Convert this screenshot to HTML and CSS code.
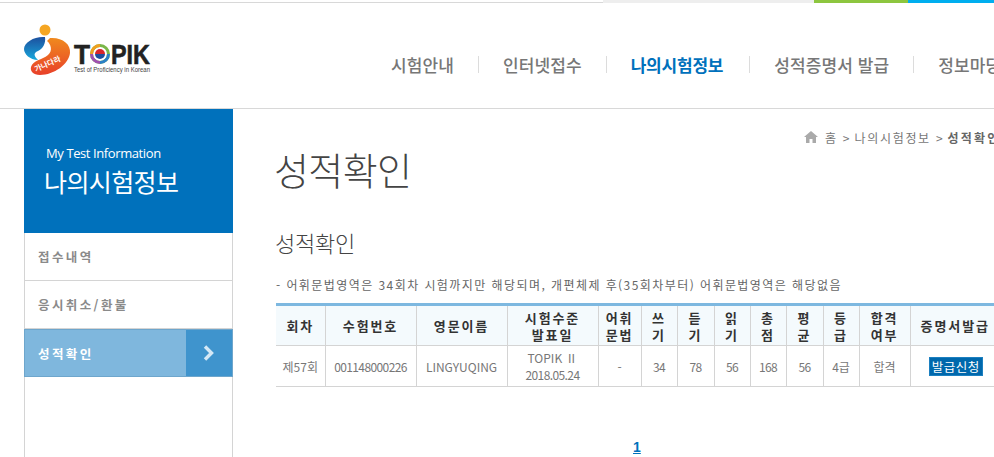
FILE: index.html
```html
<!DOCTYPE html>
<html lang="ko">
<head>
<meta charset="utf-8">
<title>TOPIK 성적확인</title>
<link rel="stylesheet" href="styles.css">
</head>
<body>
<div class="page">
  <div class="topstrip">
    <span class="strip strip-grey"></span>
    <span class="strip strip-green"></span>
    <span class="strip strip-blue"></span>
  </div>
  <header class="header">
    <svg class="logo" width="130" height="56" viewBox="24 22 130 56" aria-label="TOPIK">
      <defs>
        <linearGradient id="gblue" x1="0" y1="0" x2="0" y2="1">
          <stop offset="0" stop-color="#1d4f9e"/><stop offset="1" stop-color="#18a8dc"/>
        </linearGradient>
        <linearGradient id="gred" x1="0" y1="0" x2="0" y2="1">
          <stop offset="0" stop-color="#f08a1e"/><stop offset="1" stop-color="#e8402a"/>
        </linearGradient>
      </defs>
      <circle cx="45" cy="30" r="5.5" fill="#f5a623"/>
      <path d="M45 37C35 36 24 42 24 49C24 54 30 60 38 60C34 56 33 53 38 51C43 49 46 43 45 37Z" fill="url(#gblue)"/>
      <path d="M50 38C62 37 71 44 70 53C69 64 54 75 40 75C33 75 30 71 31 67C33 60 42 60 48 55C53 51 51 44 47 41Z" fill="url(#gred)"/>
      <text class="logo-ko" x="36" y="72" transform="rotate(-24 36 72)">가나다라</text>
      <text class="logo-big" x="74" y="64" textLength="16" lengthAdjust="spacingAndGlyphs">T</text>
      <circle cx="100" cy="54" r="8.5" fill="#fff" stroke="#7ab648" stroke-width="3"/>
      <path d="M100 45.5A8.5 8.5 0 0 0 91.5 54" fill="none" stroke="#f0a020" stroke-width="3"/>
      <path d="M91.5 54A8.5 8.5 0 0 0 100 62.5" fill="none" stroke="#a050b0" stroke-width="3"/>
      <path d="M100 62.5A8.5 8.5 0 0 0 108.5 54" fill="none" stroke="#2a80c8" stroke-width="3"/>
      <path d="M95 54A5 5 0 0 1 105 54Z" fill="#d8262c"/>
      <path d="M95 54A5 5 0 0 0 105 54Z" fill="#1d4f9e"/>
      <text class="logo-big" x="111" y="64" textLength="39" lengthAdjust="spacingAndGlyphs">PIK</text>
      <text class="logo-sub" x="74" y="72" textLength="76" lengthAdjust="spacingAndGlyphs">Test of Proficiency in Korean</text>
    </svg>
    <nav class="nav">
      <a class="nav-item">시험안내</a><i class="nav-sep"></i>
      <a class="nav-item">인터넷접수</a><i class="nav-sep"></i>
      <a class="nav-item nav-on">나의시험정보</a><i class="nav-sep"></i>
      <a class="nav-item">성적증명서 발급</a><i class="nav-sep"></i>
      <a class="nav-item">정보마당</a>
    </nav>
  </header>
  <div class="main">
    <aside class="side">
      <div class="side-head">
        <p class="side-en">My Test Information</p>
        <p class="side-ko">나의시험정보</p>
      </div>
      <a class="side-item">접수내역</a>
      <a class="side-item">응시취소/환불</a>
      <a class="side-item side-on">
        <span class="side-label">성적확인</span>
        <span class="side-arrow">
          <svg width="12" height="16" viewBox="0 0 12 16"><path d="M2 1.5 8.5 8 2 14.5" fill="none" stroke="#d4e8f6" stroke-width="3.4"/></svg>
        </span>
      </a>
    </aside>
    <section class="content">
      <div class="crumb">
        <svg class="home" width="14" height="12" viewBox="0 0 14 12"><path d="M7 0 14 6H12V12H8.5V8H5.5V12H2V6H0Z" fill="#aaa"/></svg>
        <span>홈</span><span class="crumb-gt">&gt;</span><span>나의시험정보</span><span class="crumb-gt">&gt;</span><b class="crumb-now">성적확인</b>
      </div>
      <h1 class="title">성적확인</h1>
      <h2 class="subtitle">성적확인</h2>
      <p class="note">- 어휘문법영역은 34회차 시험까지만 해당되며, 개편체제 후(35회차부터) 어휘문법영역은 해당없음</p>
      <table class="score">
        <colgroup>
          <col class="c49"><col class="c91"><col class="c91"><col class="c91"><col class="c43"><col class="c36"><col class="c37"><col class="c36"><col class="c36"><col class="c37"><col class="c36"><col class="c51"><col class="c90">
        </colgroup>
        <thead>
          <tr>
            <th>회차</th><th>수험번호</th><th>영문이름</th><th>시험수준<br>발표일</th><th>어휘<br>문법</th><th>쓰<br>기</th><th>듣<br>기</th><th>읽<br>기</th><th>총<br>점</th><th>평<br>균</th><th>등<br>급</th><th>합격<br>여부</th><th>증명서발급</th>
          </tr>
        </thead>
        <tbody>
          <tr>
            <td>제57회</td><td class="num">001148000226</td><td>LINGYUQING</td><td>TOPIK Ⅱ<br><span class="num">2018.05.24</span></td><td>-</td><td class="num">34</td><td class="num">78</td><td class="num">56</td><td class="num">168</td><td class="num">56</td><td>4급</td><td>합격</td><td><a class="btn">발급신청</a></td>
          </tr>
        </tbody>
      </table>
      <div class="pager"><a class="pager-cur">1</a></div>
    </section>
  </div>
</div>
</body>
</html>
```
FILE: styles.css
```css
* { box-sizing: border-box; }
html, body { margin: 0; padding: 0; background: #fff; }
body { font-family: "Noto Sans CJK KR", "Noto Sans", sans-serif; color: #666; }
.page { width: 994px; height: 457px; overflow: hidden; }

.topstrip { display: flex; height: 3px; border-bottom: 1px solid #d8d8d8; justify-content: flex-end; }
.strip { height: 3px; }
.strip-grey { width: 211px; background: #eeeeee; }
.strip-green { width: 94px; background: #8dc63f; }
.strip-blue { width: 86px; background: #00aeef; }

.header { position: relative; height: 106px; border-bottom: 1px solid #d8d8d8; padding-left: 391px; }
.logo { position: absolute; left: 24px; top: 19px; }
.logo-ko { font: bold 7.5px "Noto Sans CJK KR", sans-serif; fill: #fff; }
.logo-big { font: bold 28px "Liberation Sans", sans-serif; fill: #222; stroke: #222; stroke-width: .6px; }
.logo-sub { font: 7px "Liberation Sans", sans-serif; fill: #444; }

.nav { display: flex; align-items: center; height: 100%; padding-top: 18px; gap: 24px; width: 640px; white-space: nowrap; }
.nav-item { font-size: 17px; font-weight: 500; color: #777; line-height: 20px; flex: none; letter-spacing: .1px; }
.nav-on { color: #0071bc; font-weight: 700; letter-spacing: -.2px; margin-right: 2px; }
.nav-sep { flex: none; width: 1px; height: 17px; background: #dcdcdc; }

.main { display: flex; height: 348px; }
.side { flex: none; width: 209px; margin: -1px 0 0 24px; border-left: 1px solid #d4d4d4; border-right: 1px solid #d4d4d4; }
.side-head { height: 125px; margin: 0 -1px; background: #0071bc; color: #fff; padding: 37px 0 0 20px; }
.side-en { margin: 0; font: 13px/17px "Open Sans", sans-serif; letter-spacing: -.4px; padding-left: 2px; }
.side-ko { margin: 2px 0 0; font-size: 25px; line-height: 34px; letter-spacing: -.6px; font-weight: 400; }
.side-item { display: flex; align-items: center; height: 48px; padding-left: 13px; font-size: 12.5px; font-weight: 700; color: #8a8a8a; letter-spacing: 2.4px; border-bottom: 1px solid #d4d4d4; }
.side-on { height: 48px; margin: 0 -1px; padding-left: 0; color: #fff; background: #7fb7dd; border: 1px solid #6ea6cc; }
.side-label { flex: 1; padding-left: 13px; }
.side-arrow { flex: none; width: 46px; height: 100%; background: #3f94cd; display: flex; align-items: center; justify-content: center; }

.content { flex: 1; min-width: 0; padding-left: 43px; overflow: hidden; }
.crumb { display: flex; align-items: center; gap: 5px; height: 16px; margin-top: 20px; padding-left: 528px; font-size: 12px; color: #777; white-space: nowrap; letter-spacing: 1.7px; }
.home { flex: none; margin-right: 2px; }
.crumb-gt { font-size: 12px; color: #777; letter-spacing: 0; }
.crumb-now { color: #666; flex: none; letter-spacing: 2.2px; }
.title { margin: -1px 0 0 -2px; font-size: 38px; line-height: 50px; font-weight: 300; color: #444; letter-spacing: -.6px; }
.subtitle { margin: 33px 0 0 -1px; font-size: 22px; line-height: 30px; font-weight: 300; color: #444; letter-spacing: -.2px; }
.note { margin: 20px 0 0; font-size: 12px; line-height: 16px; color: #666; letter-spacing: 1.43px; white-space: nowrap; }

.score { margin-top: 10px; width: 724px; table-layout: fixed; border-collapse: collapse; border-top: 3px solid #7db8e0; }
.c49 { width: 49px; } .c91 { width: 91px; } .c43 { width: 43px; } .c36 { width: 36px; } .c37 { width: 37px; } .c51 { width: 51px; } .c90 { width: 90px; }
.score th, .score td { border: 1px solid #d4d4d4; text-align: center; padding: 0; }
.score tr > :first-child { border-left: 0; }
.score tr > :last-child { border-right: 0; }
.score thead tr { height: 41px; }
.score tbody tr { height: 41px; }
.score th { background: #f4fafd; border-top: 0; font-size: 13px; line-height: 17px; font-weight: 700; color: #333; letter-spacing: 1.9px; }
.score td { font-size: 12px; line-height: 17px; color: #777; white-space: nowrap; }
.score .num { letter-spacing: -.6px; font-size: 12px; }
.btn { display: inline-block; width: 54px; height: 19px; margin-left: 1px; line-height: 17px; background: #0068ac; border: 1px solid #1c80c0; color: #fff; font-size: 12.5px; letter-spacing: .5px; }

.pager { margin-top: 46px; padding-left: 357px; }
.pager-cur { font: bold 14px/18px "Liberation Sans", sans-serif; color: #0071bc; text-decoration: underline; }
```
